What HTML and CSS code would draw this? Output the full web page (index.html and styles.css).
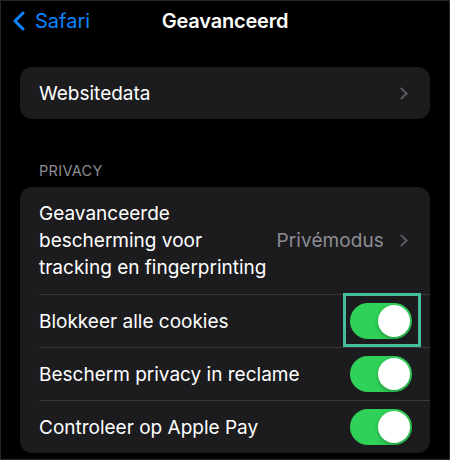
FILE: index.html
```html
<!DOCTYPE html>
<html lang="nl">
<head>
  <meta charset="UTF-8">
  <meta name="viewport" content="width=device-width, initial-scale=1.0">
  <title>Geavanceerd</title>
  <link rel="stylesheet" href="styles.css">
</head>
<body>

  <div class="screen">
    <div class="nav">
      <a class="back" href="#">
        <svg width="14" height="20" viewBox="0 0 14 20"><path d="M11 2 L3 10 L11 18" fill="none" stroke="#0a84ff" stroke-width="3" stroke-linecap="round" stroke-linejoin="round"/></svg>
        <span>Safari</span>
      </a>
      <h1 class="title">Geavanceerd</h1>
      <div></div>
    </div>

    <div class="group first">
      <div class="row">
        <span class="label">Websitedata</span>
        <span class="chevron"></span>
      </div>
    </div>

    <div class="section-title">PRIVACY</div>

    <div class="group">
      <div class="row tall">
        <span class="label wrap">Geavanceerde bescherming voor tracking en fingerprinting</span>
        <span class="value">Privémodus</span>
        <span class="chevron"></span>
      </div>
      <div class="row">
        <span class="label">Blokkeer alle cookies</span>
        <span class="toggle on marked"><span class="knob"></span></span>
      </div>
      <div class="row">
        <span class="label">Bescherm privacy in reclame</span>
        <span class="toggle on"><span class="knob"></span></span>
      </div>
      <div class="row">
        <span class="label">Controleer op Apple Pay</span>
        <span class="toggle on"><span class="knob"></span></span>
      </div>
    </div>
  </div>

</body>
</html>
```

FILE: styles.css
```css
* { box-sizing: border-box; }
body { margin: 0; background: #000; font-family: Inter, "Noto Sans", sans-serif; color: #fff; }
.screen { width: 450px; height: 460px; border: 1px solid #262628; overflow: hidden; }

.nav { display: grid; grid-template-columns: 1fr auto 1fr; align-items: center; height: 40px; }
.back { display: flex; align-items: center; gap: 9px; padding-left: 11px; color: #0a84ff; text-decoration: none; font-size: 20px; }
.title { margin: 0; font-size: 20px; font-weight: 600; letter-spacing: -0.2px; }

.group { margin: 0 19px; background: #1c1c1e; border-radius: 12px; overflow: hidden; }
.group.first { margin-top: 26px; }

.section-title { padding: 43px 0 8px 38px; font-size: 14.5px; color: #8d8d93; letter-spacing: 0.3px; }

.row { display: flex; align-items: center; min-height: 52px; padding: 0 18px 0 19px; position: relative; font-size: 19px; }
.row + .row::before { content: ""; position: absolute; top: 0; left: 19px; right: 0; height: 1px; background: #38383a; }
.row + .row { min-height: 53px; padding-top: 1px; }
.row.tall { padding-top: 13px; padding-bottom: 13px; }

.label { flex: 1; }
.label.wrap { max-width: 238px; line-height: 27px; }
.value { margin-left: auto; color: #8d8d93; letter-spacing: 0.1px; }

.chevron { width: 9px; height: 9px; margin: 0 6px 0 13px; border-top: 2px solid #5c5c60; border-right: 2px solid #5c5c60; transform: rotate(45deg); }

.toggle { position: relative; width: 62px; height: 36px; border-radius: 18px; background: #3a3a3c; flex-shrink: 0; }
.toggle.on { background: #30d158; }
.knob { position: absolute; top: 2px; right: 2px; width: 32px; height: 32px; border-radius: 50%; background: #fff; box-shadow: 0 2px 4px rgba(0, 0, 0, 0.25); }
.toggle.marked::after { content: ""; position: absolute; top: -10px; right: -9px; bottom: -8px; left: -7px; border: 3px solid #45bf9b; }
```
